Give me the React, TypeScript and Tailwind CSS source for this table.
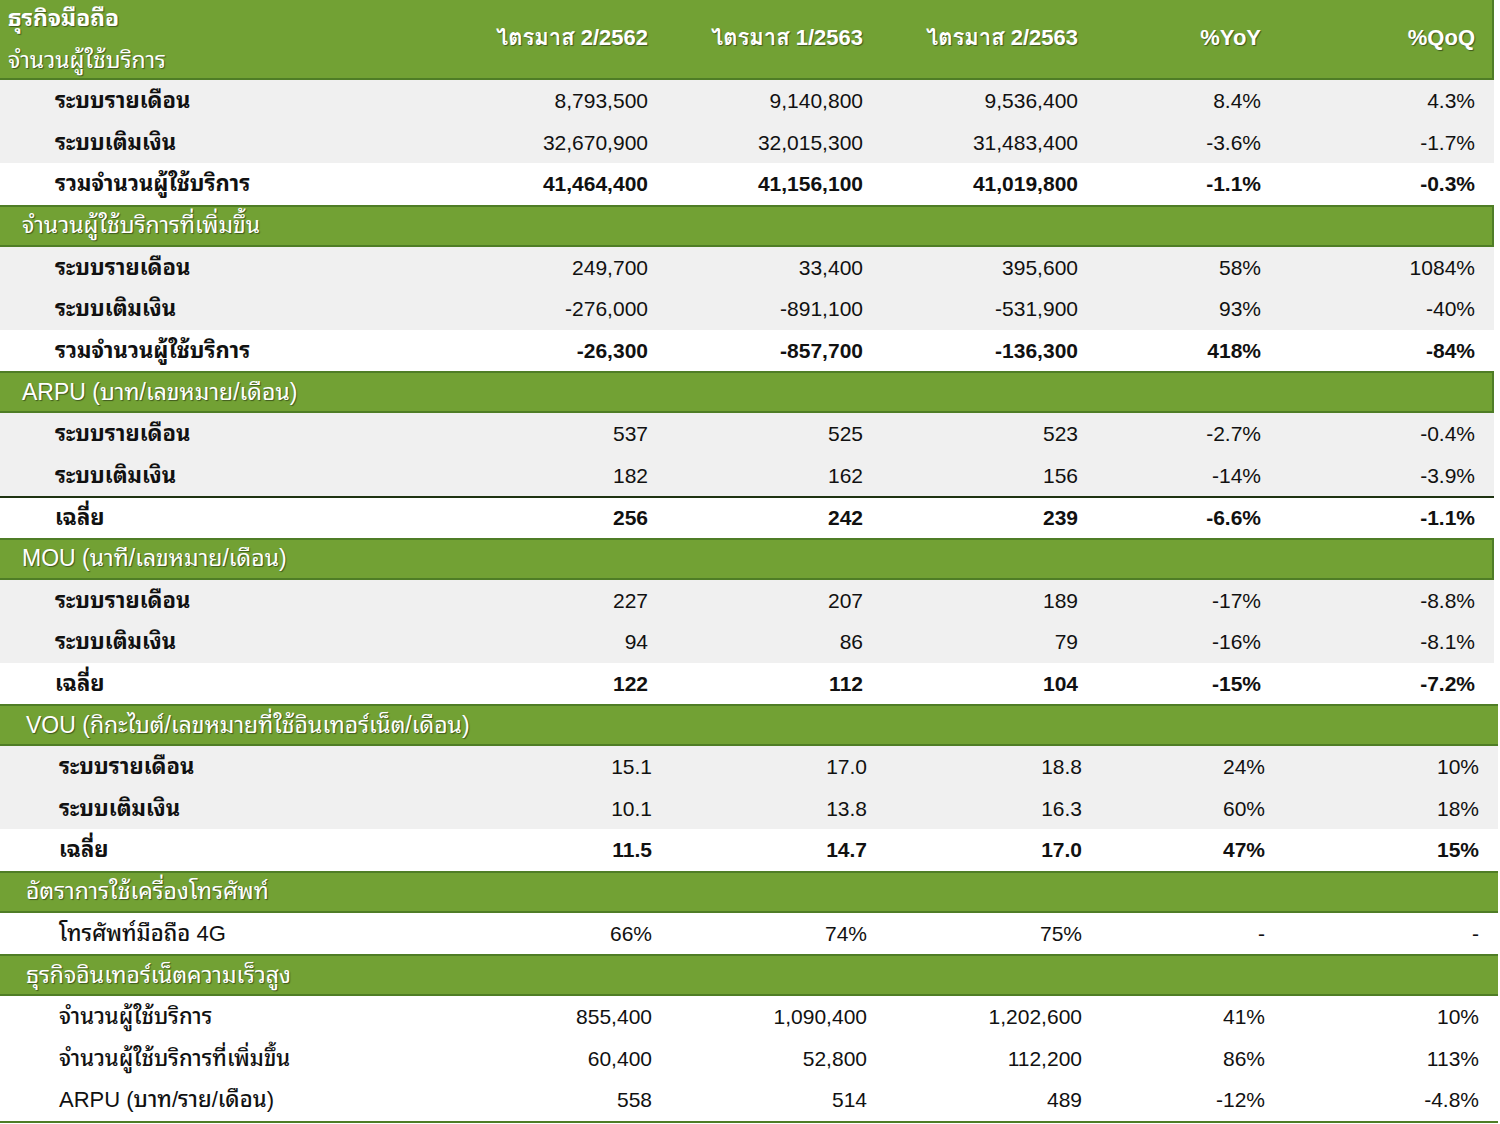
import React from "react";

type Row = { label: string; values: string[]; bold?: boolean; shade?: boolean; lineAbove?: boolean };
type Section = { title: string; rows: Row[]; wide?: boolean; labelWeight?: string };

const font =
  "font-['Liberation_Sans','Tahoma','Noto_Sans_Thai_Looped','Loma','Garuda','Norasi','Waree','Tlwg_Typo','Noto_Sans_Thai','DejaVu_Sans',sans-serif]";
const shadow = "[text-shadow:1px_1px_1px_rgba(0,0,0,0.45)]";

const sections: Section[] = [
  {
    title: "",
    rows: [
      { label: "ระบบรายเดือน", values: ["8,793,500", "9,140,800", "9,536,400", "8.4%", "4.3%"], shade: true },
      { label: "ระบบเติมเงิน", values: ["32,670,900", "32,015,300", "31,483,400", "-3.6%", "-1.7%"], shade: true },
      { label: "รวมจำนวนผู้ใช้บริการ", values: ["41,464,400", "41,156,100", "41,019,800", "-1.1%", "-0.3%"], bold: true },
    ],
  },
  {
    title: "จำนวนผู้ใช้บริการที่เพิ่มขึ้น",
    rows: [
      { label: "ระบบรายเดือน", values: ["249,700", "33,400", "395,600", "58%", "1084%"], shade: true },
      { label: "ระบบเติมเงิน", values: ["-276,000", "-891,100", "-531,900", "93%", "-40%"], shade: true },
      { label: "รวมจำนวนผู้ใช้บริการ", values: ["-26,300", "-857,700", "-136,300", "418%", "-84%"], bold: true },
    ],
  },
  {
    title: "ARPU (บาท/เลขหมาย/เดือน)",
    rows: [
      { label: "ระบบรายเดือน", values: ["537", "525", "523", "-2.7%", "-0.4%"], shade: true },
      { label: "ระบบเติมเงิน", values: ["182", "162", "156", "-14%", "-3.9%"], shade: true },
      { label: "เฉลี่ย", values: ["256", "242", "239", "-6.6%", "-1.1%"], bold: true, lineAbove: true },
    ],
  },
  {
    title: "MOU (นาที/เลขหมาย/เดือน)",
    rows: [
      { label: "ระบบรายเดือน", values: ["227", "207", "189", "-17%", "-8.8%"], shade: true },
      { label: "ระบบเติมเงิน", values: ["94", "86", "79", "-16%", "-8.1%"], shade: true },
      { label: "เฉลี่ย", values: ["122", "112", "104", "-15%", "-7.2%"], bold: true },
    ],
  },
  {
    title: "VOU (กิกะไบต์/เลขหมายที่ใช้อินเทอร์เน็ต/เดือน)",
    wide: true,
    rows: [
      { label: "ระบบรายเดือน", values: ["15.1", "17.0", "18.8", "24%", "10%"], shade: true },
      { label: "ระบบเติมเงิน", values: ["10.1", "13.8", "16.3", "60%", "18%"], shade: true },
      { label: "เฉลี่ย", values: ["11.5", "14.7", "17.0", "47%", "15%"], bold: true },
    ],
  },
  {
    title: "อัตราการใช้เครื่องโทรศัพท์",
    wide: true,
    labelWeight: "font-medium",
    rows: [{ label: "โทรศัพท์มือถือ 4G", values: ["66%", "74%", "75%", "-", "-"] }],
  },
  {
    title: "ธุรกิจอินเทอร์เน็ตความเร็วสูง",
    wide: true,
    labelWeight: "font-medium",
    rows: [
      { label: "จำนวนผู้ใช้บริการ", values: ["855,400", "1,090,400", "1,202,600", "41%", "10%"] },
      { label: "จำนวนผู้ใช้บริการที่เพิ่มขึ้น", values: ["60,400", "52,800", "112,200", "86%", "113%"] },
      { label: "ARPU (บาท/ราย/เดือน)", values: ["558", "514", "489", "-12%", "-4.8%"] },
    ],
  },
];

const cols = "grid grid-cols-[440px_208px_215px_215px_183px_214px]";

function GreenBar({ title, wide }: { title: string; wide?: boolean }) {
  return (
    <div
      className={`flex items-center h-[42px] bg-[#72a134] border-y-2 border-[#4f7d26] ${wide ? "w-[1498px] pl-[26px]" : "w-[1494px] pl-[22px] border-r-2"} text-white text-[23px] ${shadow}`}
    >
      {title}
    </div>
  );
}

function DataRow({ row, wide, labelWeight }: { row: Row; wide?: boolean; labelWeight?: string }) {
  return (
    <div
      className={`${cols} items-center h-[41.5px] ${row.shade ? "bg-[#f0f0f0]" : "bg-white"} ${wide ? "w-[1498px] pl-[4px]" : "w-[1494px]"} ${row.lineAbove ? "border-t-2 border-[#1f3312]" : ""} text-[21px] text-[#111]`}
    >
      <div className={`pl-[55px] text-[22px] ${row.bold ? "font-bold" : labelWeight ?? "font-bold"}`}>{row.label}</div>
      {row.values.map((v, i) => (
        <div key={i} className={`text-right ${row.bold ? "font-bold" : ""}`}>
          {v}
        </div>
      ))}
    </div>
  );
}

export default function App() {
  const heads = ["ไตรมาส 2/2562", "ไตรมาส 1/2563", "ไตรมาส 2/2563", "%YoY", "%QoQ"];
  return (
    <div className={`w-[1500px] h-[1124px] bg-white overflow-hidden ${font}`}>
      {/* หัวตาราง */}
      <div className={`${cols} relative w-[1494px] h-[80px] bg-[#72a134] border-b-2 border-r-2 border-[#4f7d26] text-white ${shadow}`}>
        <div className="flex flex-col justify-between pl-[8px] py-[1px] text-[23px]">
          <span className="font-bold">ธุรกิจมือถือ</span>
          <span>จำนวนผู้ใช้บริการ</span>
        </div>
        {heads.map((h) => (
          <div
            key={h}
            className="flex items-center justify-end text-[22px] font-bold font-['Liberation_Sans_Narrow','Liberation_Sans','Tahoma','Loma','Garuda','Noto_Sans_Thai',sans-serif] pb-[4px]"
          >
            {h}
          </div>
        ))}
      </div>

      {sections.map((s, si) => (
        <div key={si}>
          {s.title && <GreenBar title={s.title} wide={s.wide} />}
          {s.rows.map((r, ri) => (
            <DataRow key={ri} row={r} wide={s.wide} labelWeight={s.labelWeight} />
          ))}
        </div>
      ))}
      <div className="w-[1498px] h-[2px] bg-[#4f7d26]" />
    </div>
  );
}
